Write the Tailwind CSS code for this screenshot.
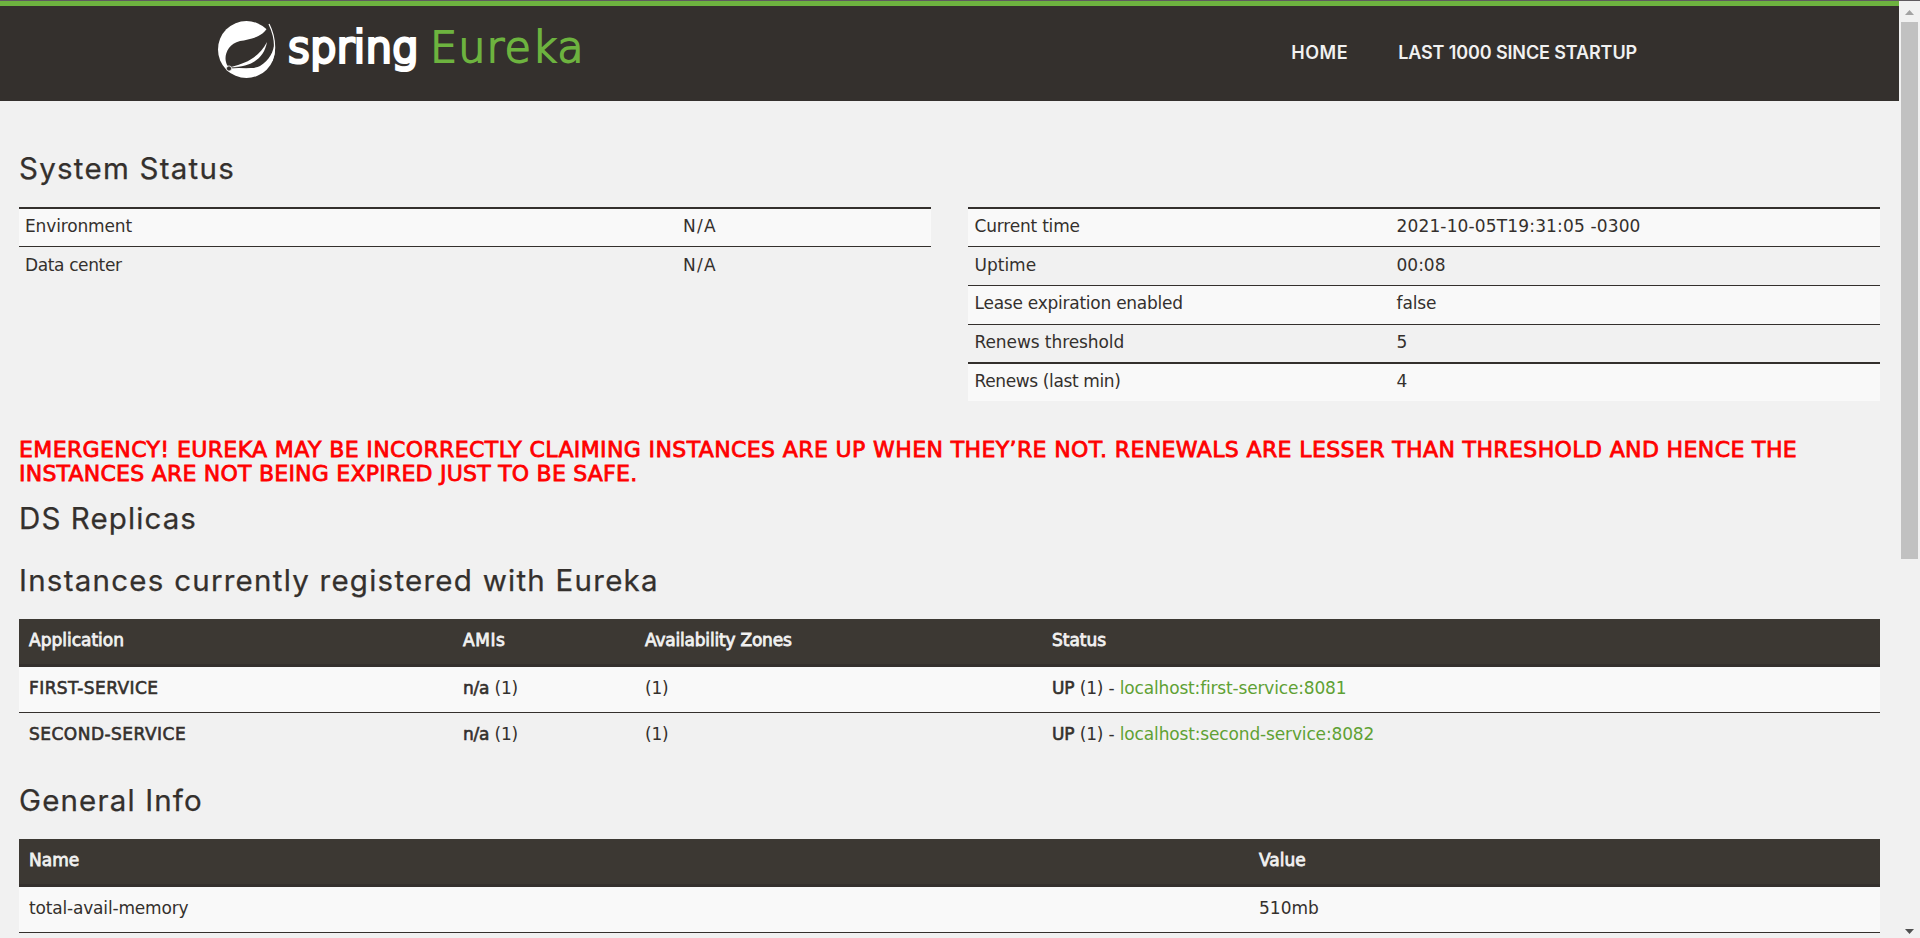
<!DOCTYPE html>
<html lang="en"><head><meta charset="utf-8"><title>Eureka</title>
<script src="https://cdn.jsdelivr.net/npm/@tailwindcss/browser@4"></script></head>
<body class="h-[938px] overflow-hidden bg-[#f1f1f1] font-['DejaVu_Sans',sans-serif] text-[17px] leading-6 text-[#34302d]">
<div class="flex h-[938px] flex-col border-t border-[#5f5a5f]">
<div class="flex min-h-0 flex-1">
<div class="min-w-0 flex-1 overflow-hidden">
  <header class="flex h-[100px] items-start border-t-5 border-[#6db33f] bg-[#34302d] pl-[217px]">
    <svg class="mt-[14px] size-[59px] shrink-0" viewBox="0 0 59 59"><circle cx="29.5" cy="29.5" r="28.5" fill="#fff"/><path d="M52 5C46 18 33 19 23 21C11 24 7 35 9 42C10 46 12 48 16 49C25 49 34 50 43 46C53 40 58 30 57 20C56 14 54 9 52 5Z" fill="#34302d"/><path d="M52 4C59 18 61 40 49 46C40 50 25 49 13 48" fill="none" stroke="#fff" stroke-width="1.2"/><path d="M50 22C47 39 34 47 14 47C30 43 42 37 50 22Z" fill="#fff"/><circle cx="12" cy="48.500" r="2.600" fill="#34302d" stroke="#fff" stroke-width=".8"/></svg>
    <div class="ml-[12px] mt-[13px] flex items-start whitespace-nowrap font-extralight leading-[56px] [stroke-linejoin:round]"><div class="w-[142px] pt-px text-[42px] text-white [-webkit-text-stroke:4px_#fff]">spring</div><span class="text-[43px] tracking-[1.1px] text-[#6db33f] [-webkit-text-stroke:1.8px_#6db33f]">Eureka</span></div>
    <nav class="ml-auto mr-[262px] mt-[35px] flex gap-[50px] whitespace-nowrap font-['Inter',sans-serif] font-semibold text-[18px] text-[#f1f1f1]"><span class="tracking-[0.5px]">HOME</span><span class="tracking-[-0.12px]">LAST 1000 SINCE STARTUP</span></nav>
  </header>
  <main class="px-[19px]">
    <h1 class="mt-[48px] h-[58px] font-['Inter',sans-serif] text-[29.5px] leading-[39px] tracking-[1.25px] [-webkit-text-stroke:0.25px]">System Status</h1>
    <div class="flex h-[194px] items-start gap-[37px]">
      <div class="w-[912px] border-t-2 border-[#34302d]">
        <div class="flex h-[38px] border-b border-[#34302d] bg-[#f9f9f9] pl-1.5 pt-[5px]"><div class="w-[658px] tracking-[-0.15px]">Environment</div><span class="tracking-[1.3px]">N/A</span></div>
        <div class="flex h-[38px] pl-1.5 pt-[6px]"><div class="w-[658px] tracking-[-0.37px]">Data center</div><span class="tracking-[1.3px]">N/A</span></div>
      </div>
      <div class="w-[912px] border-t-2 border-[#34302d]">
        <div class="flex h-[38px] border-b border-[#34302d] bg-[#f9f9f9] pl-[6.5px] pt-[5px]"><div class="w-[422px] tracking-[-0.2px]">Current time</div><span class="tracking-[0.15px]">2021-10-05T19:31:05 -0300</span></div>
        <div class="flex h-[39px] border-b border-[#34302d] pl-[6.5px] pt-[6px]"><div class="w-[422px]">Uptime</div><span>00:08</span></div>
        <div class="flex h-[39px] border-b border-[#34302d] bg-[#f9f9f9] pl-[6.5px] pt-[5px]"><div class="w-[422px] tracking-[-0.25px]">Lease expiration enabled</div><span class="tracking-[-0.1px]">false</span></div>
        <div class="flex h-[39px] border-b-2 border-[#34302d] pl-[6.5px] pt-[5px]"><div class="w-[422px] tracking-[-0.08px]">Renews threshold</div><span>5</span></div>
        <div class="flex h-[37px] bg-[#f9f9f9] pl-[6.5px] pt-[5px]"><div class="w-[422px] tracking-[-0.37px]">Renews (last min)</div><span>4</span></div>
      </div>
    </div>
    <h4 class="mt-[37px] whitespace-nowrap text-[22px] leading-[24px] text-[#ff0000] [-webkit-text-stroke:0.8px_#ff0000]"><span class="tracking-[0.383px]">EMERGENCY! EUREKA MAY BE INCORRECTLY CLAIMING INSTANCES ARE UP WHEN THEY’RE NOT. RENEWALS ARE LESSER THAN THRESHOLD AND HENCE THE</span><br><span class="tracking-[0.23px]">INSTANCES ARE NOT BEING EXPIRED JUST TO BE SAFE.</span></h4>
    <h1 class="mt-[13px] h-[40px] font-['Inter',sans-serif] text-[29.5px] leading-[39px] tracking-[1.1px] [-webkit-text-stroke:0.25px]">DS Replicas</h1>
    <h1 class="mt-[22px] h-[40px] font-['Inter',sans-serif] text-[29.5px] leading-[39px] tracking-[1.25px] [-webkit-text-stroke:0.25px]">Instances currently registered with Eureka</h1>
    <div class="mt-[18px]">
      <div class="flex h-[48px] border-b-3 border-[#34302d] bg-[#3c3833] pl-2.5 pt-[9px] text-[#f1f1f1] [-webkit-text-stroke:0.8px_#f1f1f1]"><div class="w-[434px]">Application</div><div class="w-[182px] tracking-[0.6px]">AMIs</div><div class="w-[407px] tracking-[-0.2px]">Availability Zones</div><span>Status</span></div>
      <div class="flex h-[46px] border-b border-[#34302d] bg-[#f9f9f9] pl-2.5 pt-[9px]"><div class="w-[434px] tracking-[0.42px] [-webkit-text-stroke:0.6px]">FIRST-SERVICE</div><div class="w-[182px] tracking-[-0.2px]"><span class="[-webkit-text-stroke:0.6px]">n/a</span> (1)</div><div class="w-[407px] tracking-[-0.2px]">(1)</div><div class="tracking-[-0.15px]"><span class="[-webkit-text-stroke:0.6px]">UP</span> (1) - <span class="text-[#5fa134] tracking-[-0.17px]">localhost:first-service:8081</span></div></div>
      <div class="flex h-[46px] pl-2.5 pt-[9px]"><div class="w-[434px] tracking-[0.48px] [-webkit-text-stroke:0.6px]">SECOND-SERVICE</div><div class="w-[182px] tracking-[-0.2px]"><span class="[-webkit-text-stroke:0.6px]">n/a</span> (1)</div><div class="w-[407px] tracking-[-0.2px]">(1)</div><div class="tracking-[-0.15px]"><span class="[-webkit-text-stroke:0.6px]">UP</span> (1) - <span class="text-[#5fa134] tracking-[-0.15px]">localhost:second-service:8082</span></div></div>
    </div>
    <h1 class="mt-[22px] h-[40px] font-['Inter',sans-serif] text-[29.5px] leading-[39px] tracking-[1.15px] [-webkit-text-stroke:0.25px]">General Info</h1>
    <div class="mt-[18px]">
      <div class="flex h-[48px] border-b-3 border-[#34302d] bg-[#3c3833] pl-2.5 pt-[9px] text-[#f1f1f1] [-webkit-text-stroke:0.8px_#f1f1f1]"><div class="w-[1230px]">Name</div><span>Value</span></div>
      <div class="flex h-[46px] border-b border-[#34302d] bg-[#f9f9f9] pl-2.5 pt-[9px]"><div class="w-[1230px] tracking-[-0.17px]">total-avail-memory</div><span>510mb</span></div>
    </div>
  </main>
</div>
<div class="flex w-[21px] flex-col items-center bg-[#f1f1f1]"><svg class="mt-[9px] h-[5px] w-[9px]" viewBox="0 0 9 5"><path d="M4.500 0L9 5H0Z" fill="#a3a3a3"/></svg><div class="mt-[7px] h-[537px] w-[17px] bg-[#c1c1c1]"></div><svg class="mb-1 mt-auto h-[5px] w-[9px]" viewBox="0 0 9 5"><path d="M0 0H9L4.500 5Z" fill="#505050"/></svg></div>
</div></div>
</body></html>
